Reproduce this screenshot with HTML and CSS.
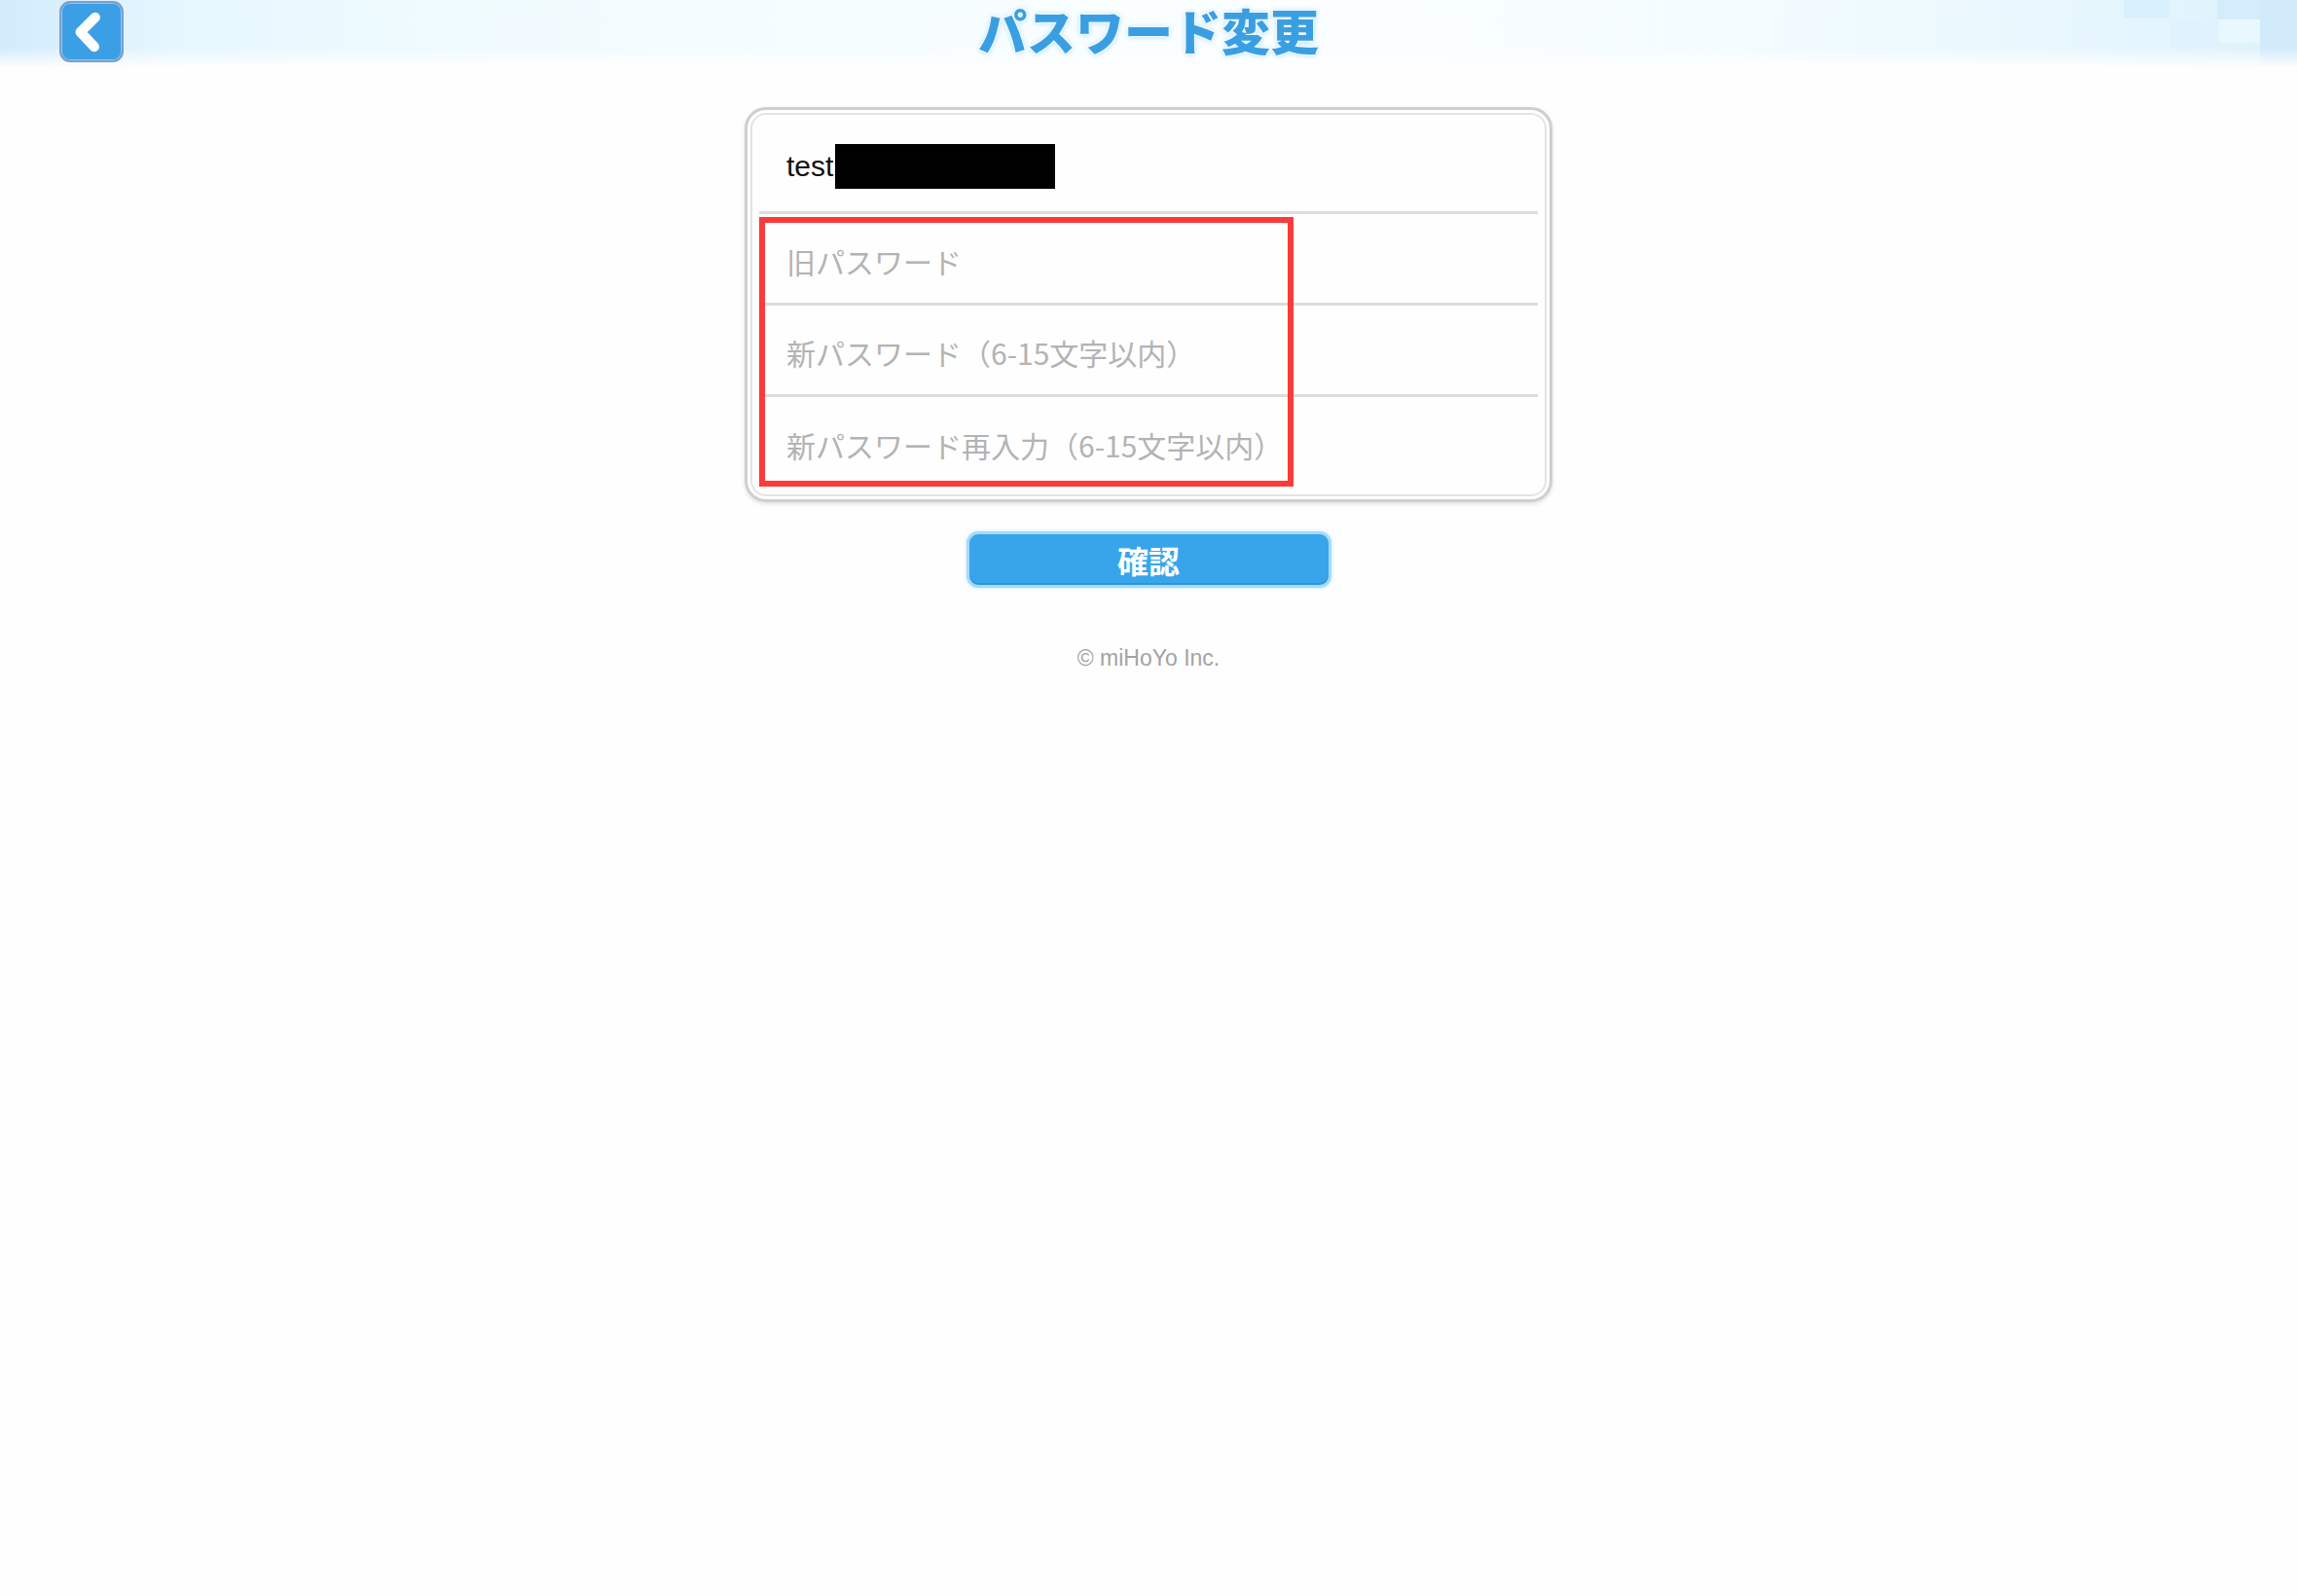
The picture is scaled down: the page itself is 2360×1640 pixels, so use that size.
FILE: index.html
```html
<!DOCTYPE html>
<html lang="ja">

<head>
    <meta charset="UTF-8" />
    <meta name="viewport" content="width=device-width, initial-scale=1.0" />
    <title>パスワード変更</title>
    <link rel="stylesheet" href="styles.css">
</head>

<body>

    <!-- 상단 바 -->
    <header class="top-bar">
        <button class="back-btn" type="button" aria-label="戻る">
            <svg width="66" height="63" viewBox="0 0 66 63">
                <polyline points="37,16 21,32 36,48" fill="none" stroke="#fff" stroke-width="11"
                    stroke-linecap="round" stroke-linejoin="round" />
            </svg>
        </button>
        <h1 class="page-title">パスワード変更</h1>
        <div class="top-side"></div>
    </header>

    <main class="content">
        <div class="form-card">
            <div class="form-row account">test<span class="masked"></span></div>
            <div class="form-row hint">旧パスワード</div>
            <div class="form-row hint">新パスワード（6-15文字以内）</div>
            <div class="form-row hint last">新パスワード再入力（6-15文字以内）</div>
            <!-- 표시용 빨간 박스 -->
            <div class="mark-box"></div>
        </div>

        <button class="confirm-btn" type="button">確認</button>

        <p class="copyright">© miHoYo Inc.</p>
    </main>

</body>

</html>
```

FILE: styles.css
```css
body {
    margin: 0;
    padding: 0;
    background-color: #fefefe;
    font-family: "Noto Sans CJK JP", "Liberation Sans", sans-serif;
    min-height: 1640px;
}

.top-bar {
    height: 70px;
    display: grid;
    grid-template-columns: 1fr auto 1fr;
    align-items: start;
    padding: 0 61px;
    background:
        linear-gradient(to bottom, rgba(255, 255, 255, 0) 70%, #fefefe 100%),
        linear-gradient(#e9f8fe, #e9f8fe) 2280px 20px / 42px 24px no-repeat,
        linear-gradient(#d2ebfb, #d2ebfb) 2322px 0 / 38px 70px no-repeat,
        linear-gradient(#dff2fd, #dff2fd) 2230px 20px / 48px 28px no-repeat,
        linear-gradient(#d8effc, #d8effc) 2182px 0 / 46px 18px no-repeat,
        linear-gradient(#d4edfc, #d4edfc) 2278px 0 / 44px 20px no-repeat,
        linear-gradient(to right, #d2ecfc 0, #e6f7ff 8%, #f0fbff 20%, #f6fdff 40%, #fcfeff 55%, #f4fcff 75%, #e8f7fe 90%, #dcf1fc 100%);
}

.back-btn {
    justify-self: start;
    margin-top: 1px;
    width: 66px;
    height: 63px;
    padding: 0;
    border: 2px solid #7f9fc6;
    border-radius: 11px;
    background-color: #3b9fe6;
    display: flex;
    align-items: center;
    justify-content: center;
    box-shadow: inset 0 0 0 1px #8cc8f3;
}

.back-btn svg {
    display: block;
}

.page-title {
    margin: 5px 0 0;
    font-size: 50px;
    line-height: 50px;
    font-weight: 900;
    letter-spacing: 0;
    color: #3a9fe2;
    text-shadow:
        0 0 2px #fff, 0 0 2px #fff, 0 0 3px #fff,
        0 0 6px #bfe5fa, 0 1px 5px #c8e9fb;
}

.content {
    display: flex;
    flex-direction: column;
    align-items: center;
}

.form-card {
    position: relative;
    margin-top: 40px;
    width: 830px;
    box-sizing: border-box;
    border: 3px solid #cfcfcf;
    border-radius: 22px;
    padding: 5px 12px 11px;
    background-color: #fefefe;
    box-shadow:
        inset 0 0 0 3px #fff,
        inset 0 0 0 5px #e3e3e3,
        0 2px 4px rgba(0, 0, 0, 0.12);
}

.form-row {
    display: flex;
    align-items: center;
    height: 91px;
    padding: 4px 0 0 28px;
    box-sizing: border-box;
    border-bottom: 3px solid #dcdcdc;
    font-size: 30px;
}

.form-row.last {
    border-bottom: none;
}

.account {
    height: 102px;
    padding-top: 6px;
    font-family: "Liberation Sans", "Noto Sans CJK JP", sans-serif;
    font-size: 30px;
    color: #111;
}

.masked {
    display: inline-block;
    width: 226px;
    height: 46px;
    margin-left: 2px;
    background-color: #000;
}

.hint {
    color: #b3b3b3;
    height: 94px;
}

.mark-box {
    position: absolute;
    left: 12px;
    top: 110px;
    width: 549px;
    height: 277px;
    box-sizing: border-box;
    border: 6px solid #fd3a3a;
}

.confirm-btn {
    margin-top: 30px;
    width: 375px;
    height: 58px;
    box-sizing: border-box;
    border: 3px solid #a3dbf8;
    border-radius: 12px;
    background-color: #38a5ea;
    color: #fff;
    font-family: "Noto Sans CJK JP", sans-serif;
    font-size: 32px;
    font-weight: 700;
    line-height: 1;
    padding: 0;
    box-shadow: 0 0 4px #c6eafc, inset 0 -2px 0 #2f95d6;
}

.copyright {
    margin: 57px 0 0;
    font-family: "Liberation Sans", sans-serif;
    font-size: 23px;
    line-height: 30px;
    color: #a3a3a3;
}
```
